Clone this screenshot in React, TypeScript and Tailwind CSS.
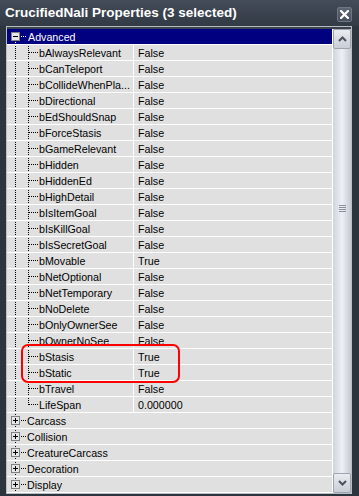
import React from "react";

const props: [string, string][] = [
  ["bAlwaysRelevant", "False"],
  ["bCanTeleport", "False"],
  ["bCollideWhenPla...", "False"],
  ["bDirectional", "False"],
  ["bEdShouldSnap", "False"],
  ["bForceStasis", "False"],
  ["bGameRelevant", "False"],
  ["bHidden", "False"],
  ["bHiddenEd", "False"],
  ["bHighDetail", "False"],
  ["bIsItemGoal", "False"],
  ["bIsKillGoal", "False"],
  ["bIsSecretGoal", "False"],
  ["bMovable", "True"],
  ["bNetOptional", "False"],
  ["bNetTemporary", "False"],
  ["bNoDelete", "False"],
  ["bOnlyOwnerSee", "False"],
  ["bOwnerNoSee", "False"],
  ["bStasis", "True"],
  ["bStatic", "True"],
  ["bTravel", "False"],
  ["LifeSpan", "0.000000"],
];

const categories = ["Carcass", "Collision", "CreatureCarcass", "Decoration", "Display"];

// dotted line helpers, one pixel on one off
function VDots({ x, y1, y2, color = "#000" }: { x: number; y1: number; y2: number; color?: string }) {
  const dots = [];
  for (let y = y1; y < y2; y++) if (y % 2 === 1) dots.push(<rect key={y} x={x} y={y} width={1} height={1} fill={color} />);
  return <>{dots}</>;
}

function HDots({ y, x1, x2, color = "#000" }: { y: number; x1: number; x2: number; color?: string }) {
  const dots = [];
  for (let x = x1; x < x2; x++) if (x % 2 === 0) dots.push(<rect key={x} x={x} y={y} width={1} height={1} fill={color} />);
  return <>{dots}</>;
}

function Expander({ open }: { open?: boolean }) {
  return (
    <>
      <rect x={4.5} y={3.5} width={8} height={8} fill="#e6e6e6" stroke="#808080" />
      <rect x={6} y={7} width={5} height={1} fill="#000" />
      {!open && <rect x={8} y={5} width={1} height={5} fill="#000" />}
    </>
  );
}

function PropRow({ name, value, last }: { name: string; value: string; last?: boolean }) {
  return (
    <div className="flex h-[16px] border-b border-white">
      <div className="flex w-[127px] shrink-0 items-center border-r border-white">
        <svg width="31" height="15" className="shrink-0">
          <VDots x={8} y1={0} y2={15} />
          <VDots x={21} y1={0} y2={last ? 8 : 15} />
          <HDots y={7} x1={22} x2={31} />
        </svg>
        <span className="whitespace-nowrap pl-[1px] pt-[1px] leading-[15px]">{name}</span>
      </div>
      <div className="flex items-center pl-[4px] pt-[1px] leading-[15px]">{value}</div>
    </div>
  );
}

function CategoryRow({ name }: { name: string }) {
  return (
    <div className="flex h-[16px] items-center border-b border-white">
      <svg width="20" height="15" className="shrink-0">
        <VDots x={8} y1={0} y2={3} />
        <VDots x={8} y1={12} y2={15} />
        <Expander />
        <HDots y={7} x1={14} x2={20} />
      </svg>
      <span className="pt-[1px] leading-[15px]">{name}</span>
    </div>
  );
}

export default function App() {
  return (
    <div
      className="flex h-[496px] w-[359px] flex-col overflow-hidden bg-[#2c343e]"
      style={{ fontFamily: '"Liberation Sans", Arial, sans-serif' }}
    >
      {/* title bar */}
      <div className="flex h-[26px] shrink-0 items-center justify-between bg-gradient-to-b from-[#434c58] to-[#323a45] pl-[5px] pr-[7px]">
        <span className="text-[13.5px] font-bold text-white">CrucifiedNali Properties (3 selected)</span>
        <div className="mt-[2px] flex h-[15px] w-[15px] items-center justify-center rounded-[2px] border border-[#6d7682] bg-gradient-to-b from-[#5d6672] to-[#47505b]">
          <svg width="9" height="9" viewBox="0 0 9 9">
            <path d="M1 1 L8 8 M8 1 L1 8" stroke="#fff" strokeWidth="2.2" strokeLinecap="square" />
          </svg>
        </div>
      </div>

      {/* property list */}
      <div className="mb-[9px] ml-[6px] mr-[7px] flex flex-1 border border-[#b9bec5] bg-[#3a424c]">
        <div className="relative mt-[2px] flex-1 overflow-hidden bg-[#e0e0e0] text-[10.7px] text-black">
          <div className="flex h-[16px] items-center border-b border-white bg-[#000080] text-white">
            <svg width="20" height="15" className="shrink-0">
              <Expander open />
              <VDots x={8} y1={12} y2={15} color="#fff" />
              <HDots y={7} x1={14} x2={20} color="#fff" />
            </svg>
            <span className="pl-[1px] pt-[1px] leading-[15px]">Advanced</span>
          </div>
          {props.map(([n, v], i) => (
            <PropRow key={n} name={n} value={v} last={i === props.length - 1} />
          ))}
          {categories.map((c) => (
            <CategoryRow key={c} name={c} />
          ))}
          {/* red annotation */}
          <div className="pointer-events-none absolute left-[14px] top-[315px] h-[39px] w-[159px] rounded-[7px] border-2 border-[#ff0000]" />
        </div>

        {/* scrollbar */}
        <div className="mt-[2px] flex w-[19px] shrink-0 flex-col border-l border-white bg-gradient-to-r from-[#cfd4dc] via-[#eef0f5] to-[#c4c9d1]">
          <div className="flex h-[20px] items-center justify-center rounded-[2px] border border-[#9ea5ae] bg-gradient-to-b from-[#e9ecf0] to-[#c9ced6]">
            <svg width="9" height="6" viewBox="0 0 9 6">
              <path d="M1 5 L4.5 1.5 L8 5" stroke="#4b525c" strokeWidth="2" fill="none" />
            </svg>
          </div>
          <div className="flex flex-1 flex-col items-center pt-[156px]">
            <div className="flex flex-col gap-[1px]">
              <div className="h-[1px] w-[7px] bg-[#8a919b]" />
              <div className="h-[1px] w-[7px] bg-[#8a919b]" />
              <div className="h-[1px] w-[7px] bg-[#8a919b]" />
              <div className="h-[1px] w-[7px] bg-[#8a919b]" />
            </div>
          </div>
          <div className="flex h-[20px] items-center justify-center rounded-[2px] border border-[#9ea5ae] bg-gradient-to-b from-[#e9ecf0] to-[#c9ced6]">
            <svg width="9" height="6" viewBox="0 0 9 6">
              <path d="M1 1 L4.5 4.5 L8 1" stroke="#4b525c" strokeWidth="2" fill="none" />
            </svg>
          </div>
        </div>
      </div>
    </div>
  );
}
